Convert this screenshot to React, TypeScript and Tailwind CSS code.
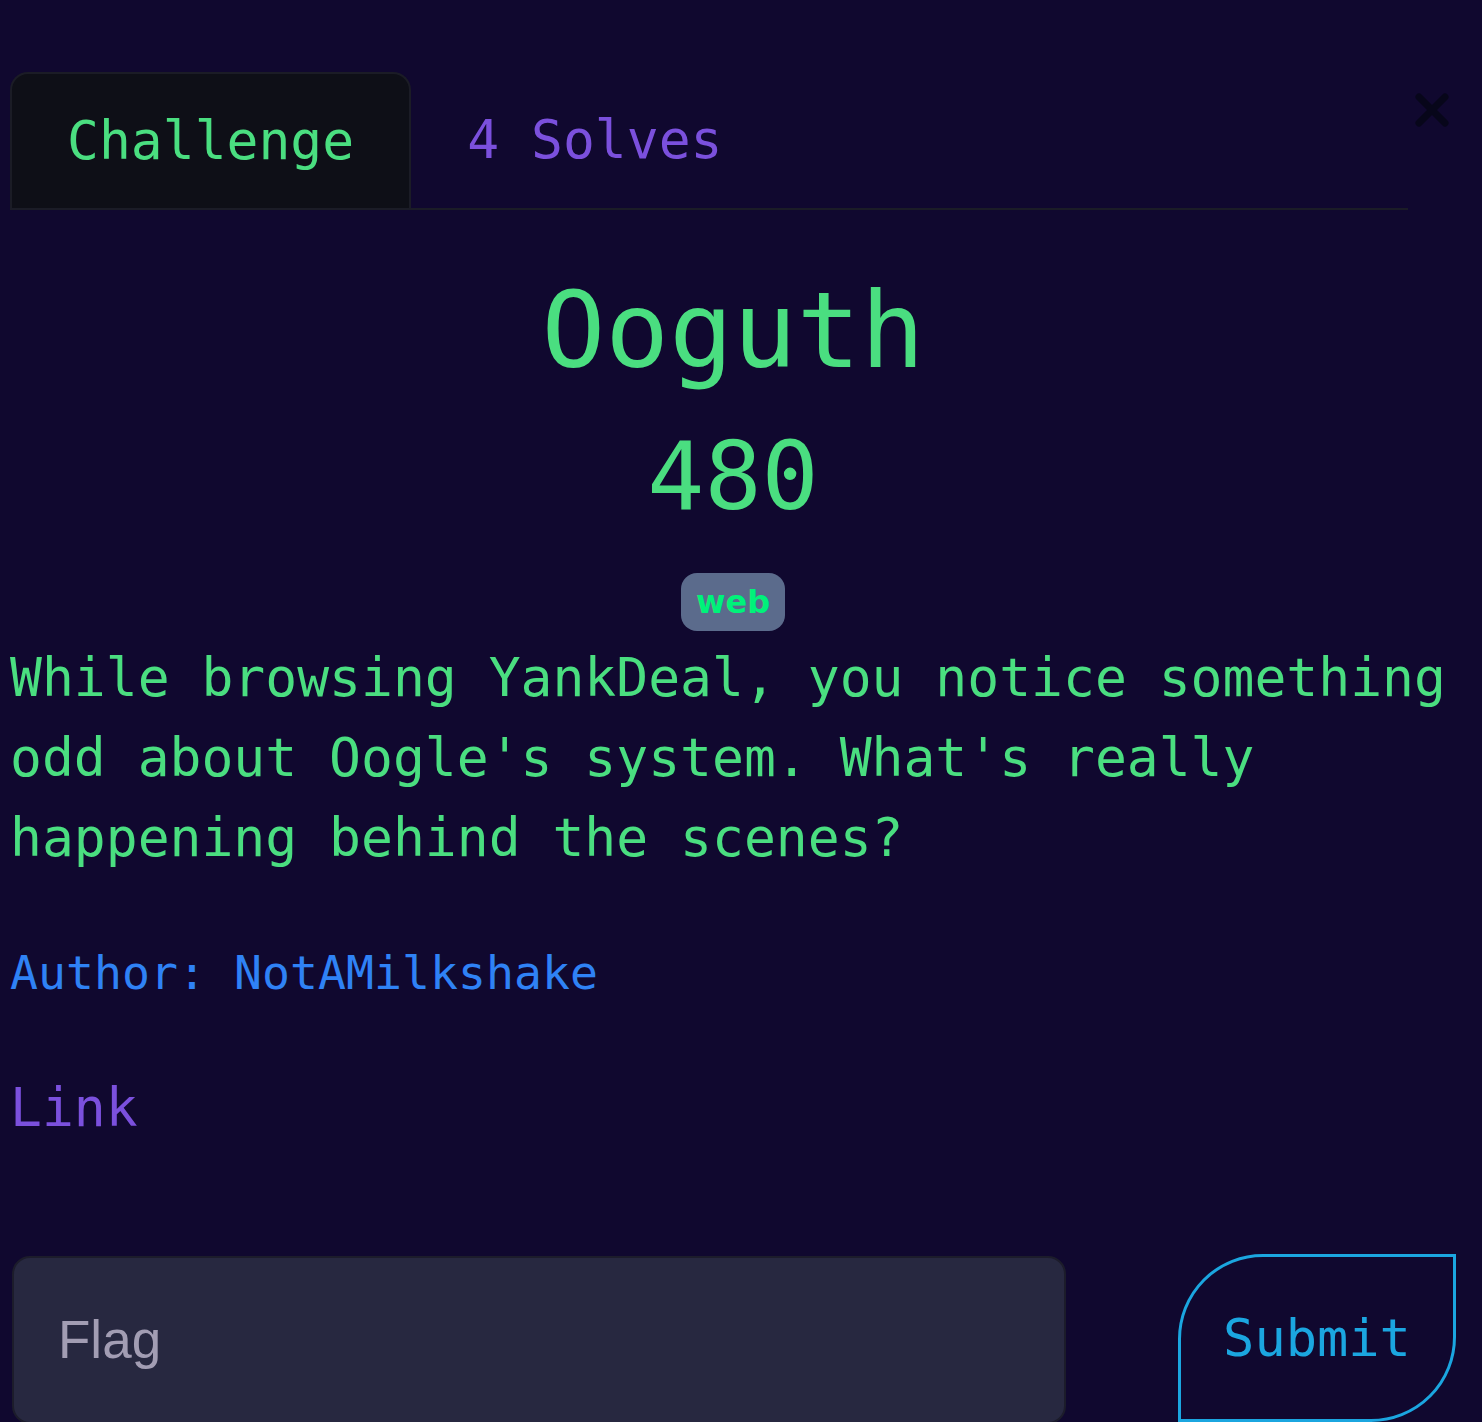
import React from "react";

const mono = "font-['DejaVu_Sans_Mono','Liberation_Mono',monospace]";

const CloseIcon: React.FC = () => (
  <svg width="34" height="34" viewBox="0 0 34 34" aria-hidden="true">
    <path d="M4 4 L30 30 M30 4 L4 30" stroke="#07061a" strokeWidth="7" strokeLinecap="round" />
  </svg>
);

const App: React.FC = () => {
  return (
    <div className={`h-screen bg-[#10082f] pl-[10px] pr-[26px] pt-[72px] overflow-hidden ${mono}`}>
      {/* tabs */}
      <div className="flex items-start">
        <div className="flex flex-1 border-b-2 border-[#1b1c27]">
          <div className="h-[136px] flex items-center px-[55px] bg-[#0e0f17] border-2 border-b-0 border-[#1b1c26] rounded-t-[18px] text-[53px] text-[#4ade80]">
            Challenge
          </div>
          <div className="h-[136px] flex items-center px-[56px] text-[53px] text-[#7b50dd]">
            4 Solves
          </div>
        </div>
        <button className="w-[48px] mt-[21px] flex items-start justify-center">
          <CloseIcon />
        </button>
      </div>

      {/* header */}
      <div className="flex flex-col items-center">
        <h2 className="mt-[57px] text-[106px] leading-[1.2] text-[#4ade80]">Ooguth</h2>
        <h3 className="mt-[25px] text-[95px] leading-[1.2] text-[#4ade80]">480</h3>
        <span className="mt-[40px] h-[58px] px-[15px] flex items-center rounded-[16px] bg-[#5b6b8c] font-['DejaVu_Sans',sans-serif] font-bold text-[32px] text-[#00f27a]">
          web
        </span>
      </div>

      {/* description */}
      <p className="mt-[7px] text-[53px] leading-[80px] text-[#4ade80]">
        While browsing YankDeal, you notice something odd about Oogle's system. What's really happening behind the scenes?
      </p>
      <p className="mt-[60px] text-[46.5px] leading-[70px] text-[#2f82f5]">Author: NotAMilkshake</p>
      <a className="block mt-[60px] text-[53px] leading-[80px] text-[#7b50dd]">Link</a>

      {/* flag form */}
      <div className="mt-[108px] flex items-start">
        <div className="ml-[2px] w-[1054px] h-[168px] flex items-center px-[44px] bg-[#272840] border-2 border-[#1c1c2b] rounded-[18px] font-['Liberation_Sans',Arial,sans-serif] text-[53px] text-[#a29db3]">
          Flag
        </div>
        <button className="ml-[112px] -mt-[2px] w-[278px] h-[168px] flex items-center justify-center border-[3px] border-[#1ba6e0] rounded-tl-[85px] rounded-br-[85px] text-[52px] text-[#1ba6e0]">
          Submit
        </button>
      </div>
    </div>
  );
};

export default App;
